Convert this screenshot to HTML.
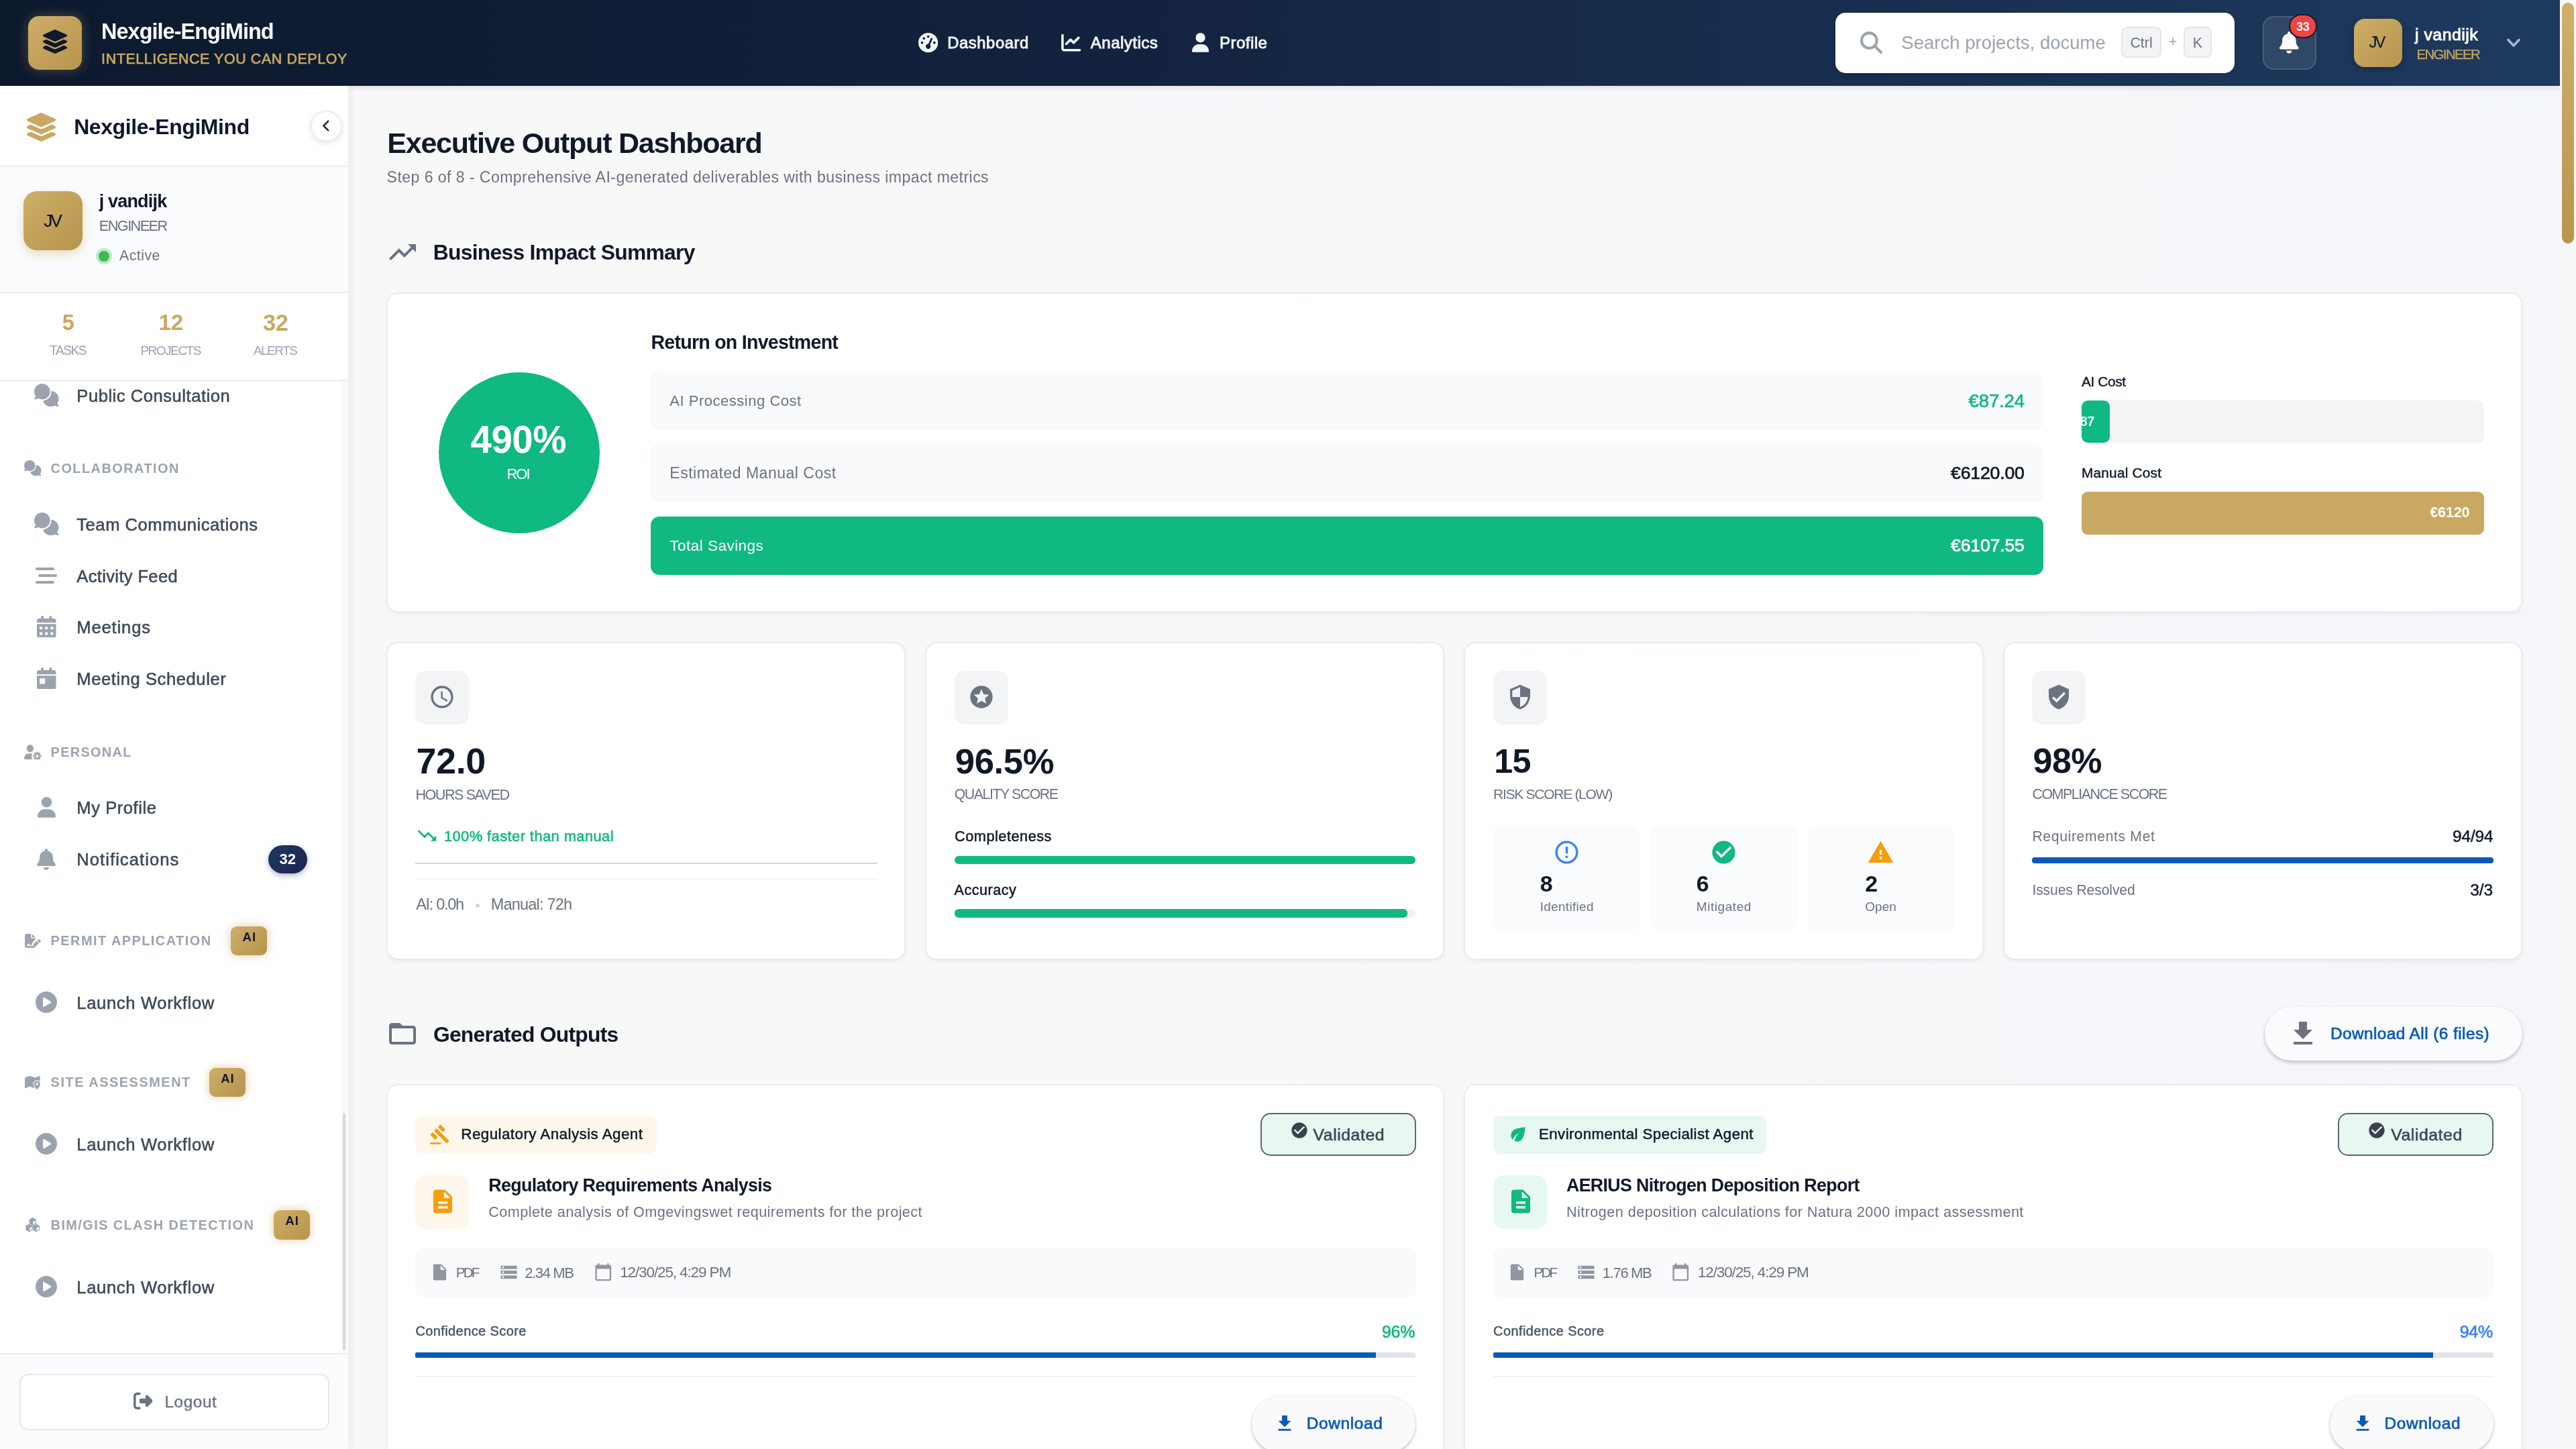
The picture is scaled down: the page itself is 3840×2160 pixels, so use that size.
<!DOCTYPE html>
<html><head><meta charset="utf-8"><title>Executive Output Dashboard</title>
<style>
html,body{margin:0;padding:0}
html{overflow:hidden}
body{width:3840px;height:2160px;overflow:hidden;position:relative;background:linear-gradient(100deg,#f8f8f8 15%,#f7f8f9 50%,#f5f6f9 100%);font-family:"Liberation Sans",sans-serif;}
div,svg{box-sizing:content-box}
@media (max-width:2600px){body{zoom:.66667}}
@media (max-width:2000px){body{zoom:.5}}
@media (max-width:1300px){body{zoom:.33333}}
</style></head><body>
<div style="position:absolute;left:0;top:0;width:3816px;height:128px;background:linear-gradient(90deg,#0c192d 0%,#13233f 45%,#1e3a5f 100%);box-shadow:0 2px 9px rgba(15,23,42,.12);z-index:5;will-change:transform">
<div style="position:absolute;left:42px;top:24px;width:80px;height:80px;border-radius:16px;background:linear-gradient(135deg,#cdae68,#b8944c);box-shadow:0 0 18px rgba(201,169,97,.35);"></div>
<svg style="position:absolute;left:64.3px;top:44px;color:#0f172a;" width="36" height="36" viewBox="0 0 512 512" preserveAspectRatio="none" fill="currentColor"><path d="M12.41 148.02l232.94 105.67c6.8 3.09 14.49 3.09 21.29 0l232.94-105.67c16.55-7.51 16.55-32.52 0-40.03L266.65 2.31a25.607 25.607 0 0 0-21.29 0L12.41 107.98c-16.55 7.51-16.55 32.53 0 40.04zm487.18 88.28l-58.09-26.33-161.64 73.27c-7.56 3.43-15.59 5.17-23.86 5.17s-16.29-1.74-23.86-5.17L70.51 209.97l-58.1 26.33c-16.55 7.5-16.55 32.5 0 40l232.94 105.59c6.8 3.08 14.49 3.08 21.29 0L499.59 276.3c16.55-7.5 16.55-32.5 0-40zm0 127.8l-57.87-26.23-161.86 73.37c-7.56 3.43-15.59 5.17-23.86 5.17s-16.29-1.74-23.86-5.17L70.29 337.87 12.41 364.1c-16.55 7.5-16.55 32.5 0 40l232.94 105.59c6.8 3.08 14.49 3.08 21.29 0L499.59 404.1c16.55-7.5 16.55-32.5 0-40z"/></svg>
<div style="position:absolute;left:151.1px;top:27.1px;font-size:32.4px;line-height:40px;color:#fff;white-space:nowrap;font-weight:700;letter-spacing:-0.95px;">Nexgile-EngiMind</div>
<div style="position:absolute;left:151.1px;top:74.8px;font-size:21.39px;line-height:27px;color:#c9a961;white-space:nowrap;letter-spacing:0.62px;-webkit-text-stroke:0.7px #c9a961;">INTELLIGENCE YOU CAN DEPLOY</div>
<svg style="position:absolute;left:1368.8px;top:49.1px;color:#f1f5f9;" width="29.4" height="29.4" viewBox="0 0 512 512" preserveAspectRatio="none" fill="currentColor"><path fill-rule="evenodd" d="M0 256a256 256 0 1 1 512 0A256 256 0 1 1 0 256zM288 96a32 32 0 1 0 -64 0 32 32 0 1 0 64 0zM256 416c35.3 0 64-28.7 64-64c0-17.4-6.9-33.1-18.1-44.6L366 161.7c5.3-12.1-.2-26.3-12.3-31.6s-26.3 .2-31.6 12.3L257.9 288c-.6 0-1.3 0-1.9 0c-35.3 0-64 28.7-64 64s28.700 64 64 64zM176 144a32 32 0 1 0 -64 0 32 32 0 1 0 64 0zM96 288a32 32 0 1 0 0-64 32 32 0 1 0 0 64zm352-32a32 32 0 1 0 -64 0 32 32 0 1 0 64 0z"/></svg>
<div style="position:absolute;left:1412.2px;top:49.4px;font-size:23.78px;line-height:30px;color:#f1f5f9;white-space:nowrap;letter-spacing:0.61px;-webkit-text-stroke:0.9px #f1f5f9;">Dashboard</div>
<svg style="position:absolute;left:1582px;top:49.1px;color:#f1f5f9;" width="29.4" height="29.4" viewBox="0 0 512 512" preserveAspectRatio="none" fill="currentColor"><path d="M64 64c0-17.7-14.3-32-32-32S0 46.3 0 64V400c0 44.2 35.8 80 80 80H480c17.7 0 32-14.3 32-32s-14.3-32-32-32H80c-8.8 0-16-7.2-16-16V64zm406.6 86.6c12.5-12.5 12.5-32.8 0-45.3s-32.8-12.5-45.3 0L320 210.7l-57.4-57.4c-12.5-12.5-32.8-12.5-45.3 0l-112 112c-12.5 12.5-12.5 32.8 0 45.3s32.8 12.5 45.3 0L240 221.3l57.4 57.4c12.5 12.5 32.8 12.5 45.3 0l128-128z"/></svg>
<div style="position:absolute;left:1625.8px;top:49.4px;font-size:23.99px;line-height:30px;color:#f1f5f9;white-space:nowrap;letter-spacing:0.5px;-webkit-text-stroke:0.9px #f1f5f9;">Analytics</div>
<svg style="position:absolute;left:1776.9px;top:49.2px;color:#f1f5f9;" width="25" height="28.8" viewBox="0 0 448 512" preserveAspectRatio="none" fill="currentColor"><path d="M224 256A128 128 0 1 0 224 0a128 128 0 1 0 0 256zm-45.7 48C79.8 304 0 383.8 0 482.3C0 498.7 13.3 512 29.7 512H418.3c16.4 0 29.7-13.3 29.7-29.7C448 383.8 368.2 304 269.7 304H178.3z"/></svg>
<div style="position:absolute;left:1818px;top:49.4px;font-size:24.04px;line-height:30px;color:#f1f5f9;white-space:nowrap;letter-spacing:0.47px;-webkit-text-stroke:0.9px #f1f5f9;">Profile</div>
<div style="position:absolute;left:2736px;top:19px;width:595px;height:89.5px;border-radius:15px;background:#fff;box-shadow:0 2px 6px rgba(0,0,0,.12);"></div>
<svg style="position:absolute;left:2772.7px;top:47.2px;color:#9ca3af;" width="33" height="33" viewBox="0 0 512 512" preserveAspectRatio="none" fill="currentColor"><path fill-rule="evenodd" d="M416 208c0 45.9-14.9 88.3-40 122.7L502.6 457.4c12.5 12.5 12.5 32.8 0 45.3s-32.8 12.5-45.3 0L330.7 376c-34.4 25.2-76.8 40-122.7 40C93.1 416 0 322.9 0 208S93.1 0 208 0S416 93.1 416 208zM208 352a144 144 0 1 0 0-288 144 144 0 1 0 0 288z"/></svg>
<div style="position:absolute;left:2830px;top:40px;width:309.8px;height:48px;overflow:hidden;"><div style="position:absolute;left:4.3px;top:6.9px;font-size:27.54px;line-height:34px;color:#9ca3af;white-space:nowrap;">Search projects, documents, tasks...</div></div>
<div style="position:absolute;left:3162px;top:40px;width:60px;height:45.5px;border-radius:8px;background:#f3f4f6;border:2px solid #e5e7eb;box-sizing:border-box;"></div>
<div style="position:absolute;left:3175.4px;top:50.7px;font-size:21.4px;line-height:27px;color:#6b7280;white-space:nowrap;letter-spacing:0.01px;">Ctrl</div>
<div style="position:absolute;left:3232.65px;top:49px;font-size:21.4px;line-height:27px;color:#9ca3af;white-space:nowrap;">+</div>
<div style="position:absolute;left:3255px;top:40px;width:42px;height:45.5px;border-radius:8px;background:#f3f4f6;border:2px solid #e5e7eb;box-sizing:border-box;"></div>
<div style="position:absolute;left:3268.66px;top:50.7px;font-size:21.4px;line-height:27px;color:#6b7280;white-space:nowrap;">K</div>
<div style="position:absolute;left:3373px;top:24px;width:80px;height:80px;border-radius:16px;background:rgba(255,255,255,.09);border:2px solid rgba(255,255,255,.13);box-sizing:border-box;"></div>
<svg style="position:absolute;left:3398px;top:47.2px;color:#fff;" width="28.6" height="32.6" viewBox="0 0 448 512" preserveAspectRatio="none" fill="currentColor"><path d="M224 0c-17.7 0-32 14.3-32 32V51.2C119 66 64 130.6 64 208v18.8c0 47-17.3 92.4-48.5 127.6l-7.4 8.3c-8.4 9.4-10.4 22.9-5.3 34.400S19.4 416 32 416H416c12.6 0 24-7.4 29.200-18.900s3.100-25-5.300-34.400l-7.400-8.300C401.300 319.200 384 273.900 384 226.800V208c0-77.400-55-142-128-156.800V32c0-17.700-14.300-32-32-32zm45.300 493.300c12-12 18.700-28.300 18.700-45.300H224 160c0 17 6.700 33.300 18.700 45.300s28.300 18.700 45.300 18.700s33.300-6.700 45.300-18.700z"/></svg>
<div style="position:absolute;left:3412.2px;top:21px;width:42px;height:35.8px;border-radius:18px;background:#ef4444;border:2.5px solid #111c33;box-sizing:border-box;"></div>
<div style="position:absolute;left:3423.21px;top:28.8px;font-size:17.6px;line-height:22px;color:#fff;white-space:nowrap;font-weight:700;">33</div>
<div style="position:absolute;left:3509px;top:27.5px;width:72px;height:72px;border-radius:16px;background:linear-gradient(135deg,#cdae68,#b8944c);box-shadow:0 3px 10px rgba(0,0,0,.25);"></div>
<div style="position:absolute;left:3531.75px;top:48.7px;font-size:23.11px;line-height:29px;color:#0f172a;white-space:nowrap;letter-spacing:-2.67px;-webkit-text-stroke:0.2px #0f172a;">JV</div>
<div style="position:absolute;left:3600.12px;top:36px;font-size:24.84px;line-height:31px;color:#fff;white-space:nowrap;letter-spacing:0.47px;-webkit-text-stroke:0.9px #fff;">j vandijk</div>
<div style="position:absolute;left:3602.4px;top:68.8px;font-size:20.25px;line-height:25px;color:#c9a961;white-space:nowrap;letter-spacing:-1.5px;-webkit-text-stroke:0.25px #c9a961;">ENGINEER</div>
<svg style="position:absolute;left:3737px;top:56.5px" width="20" height="15" viewBox="0 0 20 15" fill="none" stroke="#a9b6c9" stroke-width="3.6" stroke-linecap="round" stroke-linejoin="round"><path d="M2 2.5l8 8.5 8-8.5"/></svg>
</div>
<div style="position:absolute;left:3816px;top:0px;width:24px;height:2160px;background:#f7f8fa;z-index:6;"></div>
<div style="position:absolute;left:3819px;top:3.5px;width:17.9px;height:359.5px;border-radius:9px;background:linear-gradient(180deg,#cfb06b,#b8954f);z-index:7;"></div>
<div style="position:absolute;left:0;top:128px;width:518.7px;height:2032px;background:#fff;box-shadow:1px 0 0 #eceef0,3px 0 9px rgba(15,23,42,.07);z-index:6;overflow:hidden;will-change:transform">
<div style="position:absolute;left:0;top:-128px;width:518px;height:2160px">
<svg style="position:absolute;left:39.8px;top:167.8px;color:#c9a961;" width="43" height="43" viewBox="0 0 512 512" preserveAspectRatio="none" fill="currentColor"><path d="M12.41 148.02l232.94 105.67c6.8 3.09 14.49 3.09 21.29 0l232.94-105.67c16.55-7.51 16.55-32.52 0-40.03L266.65 2.31a25.607 25.607 0 0 0-21.29 0L12.41 107.98c-16.55 7.51-16.55 32.53 0 40.04zm487.18 88.28l-58.09-26.33-161.64 73.27c-7.56 3.43-15.59 5.17-23.86 5.17s-16.29-1.74-23.86-5.17L70.51 209.97l-58.1 26.33c-16.55 7.5-16.55 32.5 0 40l232.94 105.59c6.8 3.08 14.49 3.08 21.29 0L499.59 276.3c16.55-7.5 16.55-32.5 0-40zm0 127.8l-57.87-26.23-161.86 73.37c-7.56 3.43-15.59 5.17-23.86 5.17s-16.29-1.74-23.86-5.17L70.29 337.87 12.41 364.1c-16.55 7.5-16.55 32.5 0 40l232.94 105.59c6.8 3.08 14.49 3.08 21.29 0L499.59 404.1c16.55-7.5 16.55-32.5 0-40z"/></svg>
<div style="position:absolute;left:110.2px;top:168.7px;font-size:32px;line-height:40px;color:#0f172a;white-space:nowrap;font-weight:700;letter-spacing:-0.43px;">Nexgile-EngiMind</div>
<div style="position:absolute;left:463.2px;top:165px;width:46.4px;height:46.4px;border-radius:50%;background:#fff;border:2px solid #eceef1;box-sizing:border-box;box-shadow:0 3px 9px rgba(15,23,42,.11);"></div>
<svg style="position:absolute;left:479px;top:178.4px" width="14" height="19" viewBox="0 0 14 19" fill="none" stroke="#1f2937" stroke-width="2.5" stroke-linecap="round" stroke-linejoin="round"><path d="M10.2 2.6L3.4 9.5l6.8 6.9"/></svg>
<div style="position:absolute;left:0px;top:247px;width:518px;height:2px;background:#e9ebef;"></div>
<div style="position:absolute;left:0px;top:249px;width:518px;height:186px;background:#fafbfc;"></div>
<div style="position:absolute;left:35px;top:284.5px;width:88px;height:88px;border-radius:20px;background:linear-gradient(135deg,#cdae68,#b8944c);box-shadow:0 6px 14px rgba(201,169,97,.35);"></div>
<div style="position:absolute;left:65.15px;top:312.5px;font-size:26.35px;line-height:33px;color:#0f172a;white-space:nowrap;letter-spacing:-3.05px;-webkit-text-stroke:0.25px #0f172a;">JV</div>
<div style="position:absolute;left:147.63px;top:282.5px;font-size:27px;line-height:34px;color:#0f172a;white-space:nowrap;font-weight:700;letter-spacing:-0.81px;">j vandijk</div>
<div style="position:absolute;left:147.8px;top:322.9px;font-size:21.78px;line-height:27px;color:#6b7280;white-space:nowrap;letter-spacing:-1.61px;">ENGINEER</div>
<div style="position:absolute;left:143.2px;top:370.2px;width:24px;height:24px;border-radius:50%;background:#bfe8c8;"></div>
<div style="position:absolute;left:147.2px;top:374.2px;width:16px;height:16px;border-radius:50%;background:#3fb950;"></div>
<div style="position:absolute;left:178px;top:367.5px;font-size:21.33px;line-height:27px;color:#6b7280;white-space:nowrap;letter-spacing:0.48px;">Active</div>
<div style="position:absolute;left:0px;top:435px;width:518px;height:2px;background:#e9ebef;"></div>
<div style="position:absolute;left:92.87px;top:460.8px;font-size:32.47px;line-height:41px;color:#c9a961;white-space:nowrap;font-weight:700;">5</div>
<div style="position:absolute;left:74.05px;top:511.3px;font-size:19.29px;line-height:24px;color:#9ca3af;white-space:nowrap;letter-spacing:-1.53px;">TASKS</div>
<div style="position:absolute;left:236.5px;top:460.3px;font-size:33.42px;line-height:42px;color:#c9a961;white-space:nowrap;font-weight:700;letter-spacing:-0.37px;">12</div>
<div style="position:absolute;left:209.4px;top:511.3px;font-size:18.94px;line-height:24px;color:#9ca3af;white-space:nowrap;letter-spacing:-1.43px;">PROJECTS</div>
<div style="position:absolute;left:392px;top:459.8px;font-size:34.33px;line-height:43px;color:#c9a961;white-space:nowrap;font-weight:700;letter-spacing:-0.38px;">32</div>
<div style="position:absolute;left:377.9px;top:511.3px;font-size:18.92px;line-height:24px;color:#9ca3af;white-space:nowrap;letter-spacing:-1.45px;">ALERTS</div>
<div style="position:absolute;left:0px;top:566px;width:518px;height:2px;background:#e9ebef;"></div>
<svg style="position:absolute;left:51.05px;top:571.5px;color:#9ca3af;" width="36.5" height="34" viewBox="0 0 640 512" preserveAspectRatio="none" fill="currentColor"><path d="M208 352c114.900 0 208-78.800 208-176S322.900 0 208 0S0 78.800 0 176c0 38.600 14.700 74.300 39.600 103.400c-3.500 9.400-8.700 17.700-14.200 24.700c-4.800 6.200-9.700 11-13.300 14.300c-1.800 1.600-3.300 2.900-4.300 3.700c-.5 .4-.9 .7-1.100 .8l-.2 .2C1 327.200-1.400 334.400 .8 340.900S9.100 352 16 352c21.800 0 43.800-5.600 62.100-12.500c9.200-3.500 17.800-7.400 25.300-11.400C134.100 343.300 169.800 352 208 352zM448 176c0 112.300-99.100 196.900-216.500 207C255.800 457.400 336.400 512 432 512c38.200 0 73.900-8.700 104.700-23.900c7.500 4 16 7.900 25.200 11.400c18.300 6.900 40.300 12.500 62.100 12.500c6.900 0 13.100-4.500 15.200-11.100c2.100-6.600-.2-13.800-5.800-17.900l-.2-.2c-.2-.2-.6-.4-1.100-.8c-1-.8-2.500-2-4.300-3.700c-3.600-3.300-8.500-8.100-13.300-14.300c-5.500-7-10.700-15.400-14.200-24.700c24.900-29 39.600-64.700 39.600-103.400c0-92.800-84.900-168.900-192.600-175.500c.4 5.100 .6 10.300 .6 15.500z"/></svg><div style="position:absolute;left:114.3px;top:573.5px;font-size:25.59px;line-height:32px;color:#3f4957;white-space:nowrap;letter-spacing:0.53px;-webkit-text-stroke:0.55px #3f4957;">Public Consultation</div>
<svg style="position:absolute;left:36.15px;top:686.35px;color:#9ca3af;" width="25.5" height="23.5" viewBox="0 0 640 512" preserveAspectRatio="none" fill="currentColor"><path d="M208 352c114.900 0 208-78.800 208-176S322.900 0 208 0S0 78.800 0 176c0 38.600 14.700 74.300 39.600 103.400c-3.500 9.400-8.700 17.700-14.200 24.700c-4.800 6.200-9.700 11-13.300 14.300c-1.800 1.600-3.300 2.900-4.300 3.700c-.5 .4-.9 .7-1.100 .8l-.2 .2C1 327.200-1.400 334.400 .8 340.900S9.100 352 16 352c21.800 0 43.800-5.600 62.100-12.500c9.200-3.500 17.800-7.400 25.300-11.400C134.100 343.300 169.800 352 208 352zM448 176c0 112.300-99.100 196.900-216.500 207C255.800 457.400 336.400 512 432 512c38.200 0 73.900-8.700 104.700-23.900c7.500 4 16 7.900 25.200 11.400c18.300 6.900 40.300 12.500 62.100 12.500c6.900 0 13.100-4.500 15.200-11.100c2.100-6.600-.2-13.800-5.800-17.900l-.2-.2c-.2-.2-.6-.4-1.100-.8c-1-.8-2.500-2-4.300-3.700c-3.600-3.300-8.500-8.100-13.300-14.300c-5.500-7-10.700-15.400-14.200-24.700c24.900-29 39.600-64.700 39.600-103.400c0-92.800-84.900-168.900-192.600-175.500c.4 5.100 .6 10.300 .6 15.500z"/></svg><div style="position:absolute;left:75.6px;top:686.1px;font-size:19.9px;line-height:25px;color:#9ca3af;white-space:nowrap;font-weight:700;letter-spacing:1.47px;">COLLABORATION</div>
<svg style="position:absolute;left:51.05px;top:764px;color:#9ca3af;" width="36.5" height="34" viewBox="0 0 640 512" preserveAspectRatio="none" fill="currentColor"><path d="M208 352c114.900 0 208-78.800 208-176S322.900 0 208 0S0 78.800 0 176c0 38.600 14.700 74.300 39.600 103.400c-3.500 9.400-8.700 17.700-14.200 24.700c-4.800 6.200-9.700 11-13.300 14.300c-1.800 1.600-3.300 2.900-4.300 3.700c-.5 .4-.9 .7-1.100 .8l-.2 .2C1 327.200-1.400 334.400 .8 340.900S9.100 352 16 352c21.800 0 43.800-5.600 62.100-12.500c9.200-3.500 17.800-7.400 25.300-11.400C134.100 343.300 169.800 352 208 352zM448 176c0 112.300-99.100 196.900-216.500 207C255.800 457.400 336.400 512 432 512c38.200 0 73.900-8.700 104.700-23.900c7.500 4 16 7.900 25.200 11.400c18.300 6.900 40.300 12.500 62.100 12.500c6.900 0 13.100-4.500 15.200-11.100c2.100-6.600-.2-13.800-5.800-17.900l-.2-.2c-.2-.2-.6-.4-1.100-.8c-1-.8-2.500-2-4.300-3.700c-3.600-3.300-8.500-8.100-13.300-14.300c-5.500-7-10.700-15.400-14.200-24.700c24.900-29 39.600-64.700 39.600-103.400c0-92.800-84.900-168.900-192.600-175.500c.4 5.100 .6 10.300 .6 15.500z"/></svg><div style="position:absolute;left:114.3px;top:766px;font-size:25.59px;line-height:32px;color:#3f4957;white-space:nowrap;letter-spacing:0.53px;-webkit-text-stroke:0.55px #3f4957;">Team Communications</div>
<svg style="position:absolute;left:53.3px;top:841.6px;color:#9ca3af;" width="32" height="32" viewBox="0 0 512 512" preserveAspectRatio="none" fill="currentColor"><rect x="0" y="64" width="448" height="64" rx="32"/><rect x="64" y="224" width="448" height="64" rx="32"/><rect x="0" y="384" width="448" height="64" rx="32"/></svg><div style="position:absolute;left:114.3px;top:842.6px;font-size:25.59px;line-height:32px;color:#3f4957;white-space:nowrap;letter-spacing:0.33px;-webkit-text-stroke:0.55px #3f4957;">Activity Feed</div>
<svg style="position:absolute;left:55.05px;top:917.91px;color:#9ca3af;" width="28.5" height="32.57" viewBox="0 0 448 512" preserveAspectRatio="none" fill="currentColor"><path fill-rule="evenodd" d="M128 0c17.700 0 32 14.300 32 32V64H288V32c0-17.700 14.300-32 32-32s32 14.300 32 32V64h48c26.500 0 48 21.500 48 48v48H0V112C0 85.500 21.500 64 48 64H96V32c0-17.700 14.300-32 32-32zM0 192H448V464c0 26.500-21.500 48-48 48H48c-26.500 0-48-21.500-48-48V192zm64 80v32c0 8.800 7.200 16 16 16h32c8.800 0 16-7.200 16-16V272c0-8.800-7.200-16-16-16H80c-8.800 0-16 7.200-16 16zm128 0v32c0 8.800 7.200 16 16 16h32c8.800 0 16-7.200 16-16V272c0-8.800-7.200-16-16-16H208c-8.800 0-16 7.200-16 16zm144-16c-8.800 0-16 7.200-16 16v32c0 8.800 7.200 16 16 16h32c8.800 0 16-7.200 16-16V272c0-8.800-7.200-16-16-16H336zM64 400v32c0 8.800 7.200 16 16 16h32c8.800 0 16-7.200 16-16V400c0-8.800-7.200-16-16-16H80c-8.800 0-16 7.200-16 16zm144-16c-8.800 0-16 7.200-16 16v32c0 8.800 7.200 16 16 16h32c8.800 0 16-7.200 16-16V400c0-8.800-7.200-16-16-16H208zm112 16v32c0 8.800 7.200 16 16 16h32c8.800 0 16-7.200 16-16V400c0-8.800-7.200-16-16-16H336c-8.800 0-16 7.200-16 16z"/></svg><div style="position:absolute;left:114.3px;top:919.2px;font-size:25.59px;line-height:32px;color:#3f4957;white-space:nowrap;letter-spacing:0.85px;-webkit-text-stroke:0.55px #3f4957;">Meetings</div>
<svg style="position:absolute;left:55.05px;top:994.71px;color:#9ca3af;" width="28.5" height="32.57" viewBox="0 0 448 512" preserveAspectRatio="none" fill="currentColor"><path fill-rule="evenodd" d="M128 0c17.700 0 32 14.300 32 32V64H288V32c0-17.700 14.300-32 32-32s32 14.300 32 32V64h48c26.500 0 48 21.500 48 48v48H0V112C0 85.500 21.500 64 48 64H96V32c0-17.700 14.300-32 32-32zM0 192H448V464c0 26.500-21.500 48-48 48H48c-26.500 0-48-21.500-48-48V192zm80 64c-8.800 0-16 7.200-16 16v96c0 8.800 7.200 16 16 16h96c8.800 0 16-7.200 16-16V272c0-8.800-7.200-16-16-16H80z"/></svg><div style="position:absolute;left:114.3px;top:996px;font-size:25.59px;line-height:32px;color:#3f4957;white-space:nowrap;letter-spacing:0.57px;-webkit-text-stroke:0.55px #3f4957;">Meeting Scheduler</div>
<svg style="position:absolute;left:36.15px;top:1109.7px;color:#9ca3af;" width="25.5" height="22.4" viewBox="0 0 640 512" preserveAspectRatio="none" fill="currentColor"><circle cx="224" cy="128" r="128"/><path d="M178 304C80 304 0 384 0 482c0 17 13 30 30 30h290c-38-40-52-92-40-140 6-24 16-44 30-62-14-4-28-6-44-6z"/><circle cx="488" cy="392" r="176" fill="#fff"/><circle cx="488" cy="392" r="112"/><rect x="457" y="242" width="62" height="300" rx="10" transform="rotate(0.0 488 392)"/><rect x="457" y="242" width="62" height="300" rx="10" transform="rotate(45.0 488 392)"/><rect x="457" y="242" width="62" height="300" rx="10" transform="rotate(90.0 488 392)"/><rect x="457" y="242" width="62" height="300" rx="10" transform="rotate(135.0 488 392)"/><circle cx="488" cy="392" r="50" fill="#fff"/></svg><div style="position:absolute;left:75.6px;top:1108.9px;font-size:19.9px;line-height:25px;color:#9ca3af;white-space:nowrap;font-weight:700;letter-spacing:1.32px;">PERSONAL</div>
<svg style="position:absolute;left:55.8px;top:1187.87px;color:#9ca3af;" width="27" height="30.86" viewBox="0 0 448 512" preserveAspectRatio="none" fill="currentColor"><path d="M224 256A128 128 0 1 0 224 0a128 128 0 1 0 0 256zm-45.7 48C79.8 304 0 383.8 0 482.3C0 498.7 13.3 512 29.7 512H418.3c16.4 0 29.7-13.3 29.7-29.7C448 383.8 368.2 304 269.7 304H178.3z"/></svg><div style="position:absolute;left:114.3px;top:1188.3px;font-size:25.59px;line-height:32px;color:#3f4957;white-space:nowrap;letter-spacing:0.55px;-webkit-text-stroke:0.55px #3f4957;">My Profile</div>
<svg style="position:absolute;left:55.3px;top:1265.4px;color:#9ca3af;" width="28" height="32" viewBox="0 0 448 512" preserveAspectRatio="none" fill="currentColor"><path d="M224 0c-17.7 0-32 14.3-32 32V51.2C119 66 64 130.6 64 208v18.8c0 47-17.3 92.4-48.5 127.6l-7.4 8.3c-8.4 9.4-10.4 22.9-5.3 34.400S19.4 416 32 416H416c12.6 0 24-7.4 29.200-18.900s3.100-25-5.300-34.400l-7.400-8.300C401.300 319.200 384 273.900 384 226.800V208c0-77.400-55-142-128-156.800V32c0-17.700-14.300-32-32-32zm45.300 493.300c12-12 18.700-28.300 18.700-45.300H224 160c0 17 6.700 33.300 18.700 45.300s28.300 18.700 45.300 18.700s33.300-6.700 45.300-18.700z"/></svg><div style="position:absolute;left:114.3px;top:1265px;font-size:25.59px;line-height:32px;color:#3f4957;white-space:nowrap;letter-spacing:1.05px;-webkit-text-stroke:0.55px #3f4957;">Notifications</div>
<div style="position:absolute;left:400px;top:1260px;width:57.5px;height:42px;border-radius:21px;background:linear-gradient(135deg,#1e3a5f,#1a2352);box-shadow:0 3px 8px rgba(30,42,94,.35);"></div>
<div style="position:absolute;left:416.57px;top:1267px;font-size:22px;line-height:28px;color:#fff;white-space:nowrap;font-weight:700;">32</div>
<svg style="position:absolute;left:37.15px;top:1391.86px;color:#9ca3af;" width="23.5" height="20.89" viewBox="0 0 576 512" preserveAspectRatio="none" fill="currentColor"><path fill-rule="evenodd" d="M64 0C28.700 0 0 28.700 0 64V448c0 35.300 28.700 64 64 64H320c35.300 0 64-28.700 64-64V428l-70 18c-30 7-58-20-51-51l16-62c4-17 13-32 25-44l80-80V160H256c-17.700 0-32-14.300-32-32V0H64zM256 0V128H384L256 0zM80 420c20-60 50-80 70-50l30 50 40-30 30 40h40v30H230l-20-25-40 30-40-60-20 45H80z"/><path d="M550 218c-19-19-49-19-68 0l-30 30 84 84 30-30c19-19 19-49 0-68zM330 370c-4 4-7 9-8 15l-18 70c-3 11 8 22 19 19l70-18c6-1 11-4 15-8l106-106-84-84z"/></svg><div style="position:absolute;left:75.6px;top:1390.3px;font-size:19.9px;line-height:25px;color:#9ca3af;white-space:nowrap;font-weight:700;letter-spacing:1.48px;">PERMIT APPLICATION</div><div style="position:absolute;left:344.3px;top:1380.5px;width:54px;height:43.5px;border-radius:9px;background:linear-gradient(135deg,#cdae68,#b8944c);box-shadow:0 0 14px rgba(201,169,97,.55);"></div><div style="position:absolute;left:361.5px;top:1384.5px;font-size:18.6px;line-height:23px;color:#0f172a;white-space:nowrap;font-weight:700;letter-spacing:1px;">AI</div>
<svg style="position:absolute;left:53.3px;top:1477.8px;color:#9ca3af;" width="32" height="32" viewBox="0 0 512 512" preserveAspectRatio="none" fill="currentColor"><path fill-rule="evenodd" d="M0 256a256 256 0 1 1 512 0A256 256 0 1 1 0 256zM188.300 147.100c-7.600 4.200-12.300 12.300-12.300 20.900V344c0 8.700 4.700 16.700 12.300 20.900s16.800 4.100 24.300-.5l144-88c7.100-4.400 11.500-12.100 11.500-20.500s-4.400-16.100-11.500-20.500l-144-88c-7.400-4.500-16.700-4.700-24.300-.5z"/></svg><div style="position:absolute;left:114.3px;top:1478.8px;font-size:25.59px;line-height:32px;color:#3f4957;white-space:nowrap;letter-spacing:0.66px;-webkit-text-stroke:0.55px #3f4957;">Launch Workflow</div>
<svg style="position:absolute;left:36.6px;top:1602.1px;color:#9ca3af;" width="24.6" height="22.4" viewBox="0 0 576 512" preserveAspectRatio="none" fill="currentColor"><path d="M0 105 L175 38 L355 105 L530 38 V400 L355 468 L175 400 L0 468Z"/><path d="M430 215a108 108 0 0 1 108 108c0 58-68 140-108 189-40-49-108-131-108-189a108 108 0 0 1 108-108z" stroke="#fff" stroke-width="56" stroke-linejoin="round" paint-order="stroke"/><circle cx="430" cy="322" r="40" fill="#fff"/></svg><div style="position:absolute;left:75.6px;top:1601.3px;font-size:19.9px;line-height:25px;color:#9ca3af;white-space:nowrap;font-weight:700;letter-spacing:1.54px;">SITE ASSESSMENT</div><div style="position:absolute;left:312px;top:1591.5px;width:54px;height:43.5px;border-radius:9px;background:linear-gradient(135deg,#cdae68,#b8944c);box-shadow:0 0 14px rgba(201,169,97,.55);"></div><div style="position:absolute;left:329.2px;top:1595.5px;font-size:18.6px;line-height:23px;color:#0f172a;white-space:nowrap;font-weight:700;letter-spacing:1px;">AI</div>
<svg style="position:absolute;left:53.3px;top:1688.6px;color:#9ca3af;" width="32" height="32" viewBox="0 0 512 512" preserveAspectRatio="none" fill="currentColor"><path fill-rule="evenodd" d="M0 256a256 256 0 1 1 512 0A256 256 0 1 1 0 256zM188.300 147.100c-7.600 4.200-12.300 12.300-12.300 20.900V344c0 8.700 4.700 16.700 12.300 20.900s16.800 4.100 24.300-.5l144-88c7.100-4.400 11.500-12.100 11.500-20.500s-4.400-16.100-11.500-20.500l-144-88c-7.400-4.500-16.700-4.700-24.300-.5z"/></svg><div style="position:absolute;left:114.3px;top:1689.6px;font-size:25.59px;line-height:32px;color:#3f4957;white-space:nowrap;letter-spacing:0.66px;-webkit-text-stroke:0.55px #3f4957;">Launch Workflow</div>
<svg style="position:absolute;left:37.15px;top:1815.05px;color:#9ca3af;" width="23.5" height="21.5" viewBox="0 0 576 512" preserveAspectRatio="none" fill="currentColor"><path d="M288 12 L399 76 L399 204 L288 268 L177 204 L177 76Z" stroke="currentColor" stroke-width="30" stroke-linejoin="round"/><path d="M309 152 L378 112 L378 192 L309 232Z" fill="#fff" stroke="#fff" stroke-width="14" stroke-linejoin="round"/><path d="M160 238 L271 302 L271 430 L160 494 L49 430 L49 302Z" stroke="currentColor" stroke-width="30" stroke-linejoin="round"/><path d="M181 378 L250 338 L250 418 L181 458Z" fill="#fff" stroke="#fff" stroke-width="14" stroke-linejoin="round"/><path d="M416 238 L527 302 L527 430 L416 494 L305 430 L305 302Z" stroke="currentColor" stroke-width="30" stroke-linejoin="round"/><path d="M437 378 L506 338 L506 418 L437 458Z" fill="#fff" stroke="#fff" stroke-width="14" stroke-linejoin="round"/></svg><div style="position:absolute;left:75.6px;top:1813.8px;font-size:19.9px;line-height:25px;color:#9ca3af;white-space:nowrap;font-weight:700;letter-spacing:1.43px;">BIM/GIS CLASH DETECTION</div><div style="position:absolute;left:408.1px;top:1804px;width:54px;height:43.5px;border-radius:9px;background:linear-gradient(135deg,#cdae68,#b8944c);box-shadow:0 0 14px rgba(201,169,97,.55);"></div><div style="position:absolute;left:425.3px;top:1808px;font-size:18.6px;line-height:23px;color:#0f172a;white-space:nowrap;font-weight:700;letter-spacing:1px;">AI</div>
<svg style="position:absolute;left:53.3px;top:1901.6px;color:#9ca3af;" width="32" height="32" viewBox="0 0 512 512" preserveAspectRatio="none" fill="currentColor"><path fill-rule="evenodd" d="M0 256a256 256 0 1 1 512 0A256 256 0 1 1 0 256zM188.300 147.100c-7.600 4.200-12.300 12.300-12.300 20.900V344c0 8.700 4.700 16.700 12.300 20.900s16.800 4.100 24.300-.5l144-88c7.100-4.400 11.500-12.100 11.500-20.500s-4.400-16.100-11.500-20.500l-144-88c-7.400-4.500-16.700-4.700-24.300-.5z"/></svg><div style="position:absolute;left:114.3px;top:1902.6px;font-size:25.59px;line-height:32px;color:#3f4957;white-space:nowrap;letter-spacing:0.66px;-webkit-text-stroke:0.55px #3f4957;">Launch Workflow</div>
<div style="position:absolute;left:508px;top:568px;width:10px;height:1450px;background:#f8f9fa;"></div>
<div style="position:absolute;left:510.5px;top:1659px;width:4.5px;height:354px;border-radius:3px;background:#d5d9df;"></div>
<div style="position:absolute;left:0px;top:2017px;width:518px;height:2px;background:#e9ebef;"></div>
<div style="position:absolute;left:0px;top:2019px;width:518px;height:141px;background:#fafbfc;"></div>
<div style="position:absolute;left:29px;top:2048px;width:462px;height:84px;border-radius:13px;background:#fff;border:2px solid #e5e7eb;box-sizing:border-box;"></div>
<svg style="position:absolute;left:198.8px;top:2074.4px;color:#6b7280;" width="28.7" height="28.7" viewBox="0 0 512 512" preserveAspectRatio="none" fill="currentColor"><path d="M377.900 105.900L500.700 228.700c7.200 7.200 11.300 17.100 11.300 27.300s-4.100 20.100-11.300 27.300L377.900 406.100c-6.400 6.400-15 9.900-24 9.900c-18.700 0-33.900-15.200-33.900-33.900l0-62.100-128 0c-17.700 0-32-14.300-32-32l0-64c0-17.700 14.300-32 32-32l128 0 0-62.100c0-18.700 15.200-33.900 33.900-33.900c9 0 17.600 3.600 24 9.900zM160 96L96 96c-17.700 0-32 14.300-32 32l0 256c0 17.700 14.300 32 32 32l64 0c17.700 0 32 14.300 32 32s-14.300 32-32 32l-64 0c-53 0-96-43-96-96L0 128C0 75 43 32 96 32l64 0c17.700 0 32 14.300 32 32s-14.300 32-32 32z"/></svg>
<div style="position:absolute;left:245.5px;top:2075px;font-size:24.29px;line-height:30px;color:#6b7280;white-space:nowrap;letter-spacing:0.62px;-webkit-text-stroke:0.4px #6b7280;">Logout</div>
</div></div>
<div style="position:absolute;left:0;top:0;width:3816px;height:2160px;overflow:hidden;will-change:transform">
<div style="position:absolute;left:577.3px;top:185.5px;font-size:43px;line-height:54px;color:#111827;white-space:nowrap;font-weight:700;letter-spacing:-1.23px;">Executive Output Dashboard</div><div style="position:absolute;left:576.6px;top:249.8px;font-size:23.07px;line-height:29px;color:#6b7280;white-space:nowrap;letter-spacing:0.44px;">Step 6 of 8 - Comprehensive AI-generated deliverables with business impact metrics</div><svg style="position:absolute;left:576px;top:351.5px;color:#6b7280;" width="48" height="48" viewBox="0 0 24 24" preserveAspectRatio="none" fill="currentColor"><path d="M16 6l2.29 2.29-4.88 4.88-4-4L2 16.59 3.41 18l6-6 4 4 6.3-6.29L22 12V6z"/></svg><div style="position:absolute;left:645.8px;top:356.4px;font-size:31.8px;line-height:40px;color:#111827;white-space:nowrap;font-weight:700;letter-spacing:-0.72px;">Business Impact Summary</div>
<div style="position:absolute;left:575.5px;top:435.5px;width:3184.5px;height:477.5px;background:#fff;border:2px solid #e9ebee;box-sizing:border-box;border-radius:17px;box-shadow:0 3px 6px rgba(15,23,42,.045);"></div><div style="position:absolute;left:654.2px;top:555px;width:240px;height:240px;border-radius:50%;background:#10b981;"></div><div style="position:absolute;left:701.5px;top:619.5px;font-size:56.46px;line-height:71px;color:#fff;white-space:nowrap;font-weight:700;letter-spacing:-0.48px;">490%</div><div style="position:absolute;left:755.5px;top:692.7px;font-size:21.85px;line-height:27px;color:#fff;white-space:nowrap;letter-spacing:-1.93px;">ROI</div><div style="position:absolute;left:970.4px;top:492.1px;font-size:28.6px;line-height:36px;color:#111827;white-space:nowrap;font-weight:700;letter-spacing:-0.76px;">Return on Investment</div><div style="position:absolute;left:970px;top:554px;width:2076px;height:86.5px;border-radius:13px;background:#f9fafb;"></div><div style="position:absolute;left:998.3px;top:583.5px;font-size:22.13px;line-height:28px;color:#6b7280;white-space:nowrap;letter-spacing:0.46px;">AI Processing Cost</div><div style="position:absolute;left:2934.6px;top:580.5px;font-size:27.54px;line-height:34px;color:#10b981;white-space:nowrap;letter-spacing:-0.17px;-webkit-text-stroke:0.7px #10b981;">€87.24</div><div style="position:absolute;left:970px;top:662px;width:2076px;height:86.5px;border-radius:13px;background:#f9fafb;"></div><div style="position:absolute;left:998.3px;top:691px;font-size:23px;line-height:29px;color:#6b7280;white-space:nowrap;letter-spacing:0.5px;">Estimated Manual Cost</div><div style="position:absolute;left:2908px;top:689px;font-size:26.64px;line-height:33px;color:#111827;white-space:nowrap;letter-spacing:-0.16px;-webkit-text-stroke:0.7px #111827;">€6120.00</div><div style="position:absolute;left:970px;top:770px;width:2076px;height:86.5px;border-radius:13px;background:#10b981;"></div><div style="position:absolute;left:998.3px;top:799.5px;font-size:22.52px;line-height:28px;color:#fff;white-space:nowrap;letter-spacing:0.47px;">Total Savings</div><div style="position:absolute;left:2908px;top:797px;font-size:26.64px;line-height:33px;color:#fff;white-space:nowrap;letter-spacing:-0.16px;-webkit-text-stroke:0.7px #fff;">€6107.55</div><div style="position:absolute;left:3103px;top:556.2px;font-size:20.82px;line-height:26px;color:#111827;white-space:nowrap;letter-spacing:-0.38px;-webkit-text-stroke:0.4px #111827;">AI Cost</div><div style="position:absolute;left:3103px;top:597px;width:600px;height:63px;border-radius:9px;background:#f3f4f6;overflow:hidden;"><div style="position:absolute;left:0px;top:0px;width:41.5px;height:63px;border-radius:9px;background:#10b981;overflow:hidden;"><div style="position:absolute;left:-2.6px;top:19.3px;font-size:19.98px;line-height:25px;color:#fff;white-space:nowrap;font-weight:700;letter-spacing:-0.22px;">87</div></div></div><div style="position:absolute;left:3103px;top:692.4px;font-size:20.82px;line-height:26px;color:#111827;white-space:nowrap;letter-spacing:0.21px;-webkit-text-stroke:0.4px #111827;">Manual Cost</div><div style="position:absolute;left:3103px;top:733px;width:600px;height:63.5px;border-radius:9px;background:#c9a961;"></div><div style="position:absolute;left:3622.3px;top:751.1px;font-size:21.5px;line-height:27px;color:#fff;white-space:nowrap;font-weight:700;letter-spacing:-0.15px;">€6120</div>
<div style="position:absolute;left:575.5px;top:957px;width:774.5px;height:473.5px;background:#fff;border:2px solid #e9ebee;box-sizing:border-box;border-radius:17px;box-shadow:0 3px 6px rgba(15,23,42,.045);"></div><div style="position:absolute;left:619.2px;top:1000px;width:80px;height:80px;border-radius:15px;background:#f3f4f6;"></div><svg style="position:absolute;left:639.2px;top:1019.2px;color:#6b7280;" width="40" height="40" viewBox="0 0 24 24" preserveAspectRatio="none" fill="currentColor"><path d="M11.99 2C6.47 2 2 6.48 2 12s4.47 10 9.99 10C17.52 22 22 17.52 22 12S17.52 2 11.99 2zM12 20c-4.42 0-8-3.58-8-8s3.58-8 8-8 8 3.58 8 8-3.58 8-8 8zm.5-13H11v6l5.25 3.15.75-1.23-4.5-2.67z"/></svg><div style="position:absolute;left:620.5px;top:1101px;font-size:53.87px;line-height:67px;color:#111827;white-space:nowrap;font-weight:700;letter-spacing:-0.35px;">72.0</div><div style="position:absolute;left:619.4px;top:1170.7px;font-size:21.68px;line-height:27px;color:#6b7280;white-space:nowrap;letter-spacing:-1.55px;">HOURS SAVED</div><svg style="position:absolute;left:619.5px;top:1229.4px;color:#10b981;" width="33" height="33" viewBox="0 0 24 24" preserveAspectRatio="none" fill="currentColor"><path d="M16 18l2.29-2.29-4.88-4.88-4 4L2 7.41 3.41 6l6 6 4-4 6.3 6.29L22 12v6z"/></svg><div style="position:absolute;left:661.9px;top:1232.5px;font-size:21.82px;line-height:27px;color:#10b981;white-space:nowrap;letter-spacing:0.46px;-webkit-text-stroke:0.6px #10b981;">100% faster than manual</div><div style="position:absolute;left:619px;top:1286px;width:688.5px;height:2px;background:#d1d5db;"></div><div style="position:absolute;left:619px;top:1308.5px;width:688.5px;height:2px;background:#f1f2f4;"></div><div style="position:absolute;left:620.2px;top:1334.2px;font-size:23.49px;line-height:29px;color:#6b7280;white-space:nowrap;letter-spacing:-1.3px;">AI: 0.0h</div><div style="position:absolute;left:708.5px;top:1346.5px;width:6.6px;height:6.6px;border-radius:50%;background:#d1d5db;"></div><div style="position:absolute;left:731.7px;top:1334.2px;font-size:23.49px;line-height:29px;color:#6b7280;white-space:nowrap;letter-spacing:-0.79px;">Manual: 72h</div><div style="position:absolute;left:1378.83px;top:957px;width:774.5px;height:473.5px;background:#fff;border:2px solid #e9ebee;box-sizing:border-box;border-radius:17px;box-shadow:0 3px 6px rgba(15,23,42,.045);"></div><div style="position:absolute;left:1422.53px;top:1000px;width:80px;height:80px;border-radius:15px;background:#f3f4f6;"></div><svg style="position:absolute;left:1442.53px;top:1019.2px;color:#6b7280;" width="40" height="40" viewBox="0 0 24 24" preserveAspectRatio="none" fill="currentColor"><path d="M11.99 2C6.47 2 2 6.48 2 12s4.47 10 9.99 10C17.52 22 22 17.52 22 12S17.52 2 11.99 2zm4.24 16L12 15.45 7.77 18l1.12-4.81-3.73-3.23 4.92-.42L12 5l1.92 4.53 4.92.42-3.73 3.23L16.23 18z"/></svg><div style="position:absolute;left:1423.83px;top:1101.5px;font-size:52.62px;line-height:66px;color:#111827;white-space:nowrap;font-weight:700;letter-spacing:-0.37px;">96.5%</div><div style="position:absolute;left:1422.73px;top:1170.7px;font-size:21.29px;line-height:27px;color:#6b7280;white-space:nowrap;letter-spacing:-1.42px;">QUALITY SCORE</div><div style="position:absolute;left:1423px;top:1232.5px;font-size:21.7px;line-height:27px;color:#111827;white-space:nowrap;letter-spacing:0.53px;-webkit-text-stroke:0.5px #111827;">Completeness</div><div style="position:absolute;left:1422.7px;top:1275.5px;width:687.6px;height:12.3px;border-radius:6.2px;background:#10b981;"></div><div style="position:absolute;left:1422.5px;top:1312.5px;font-size:21.55px;line-height:27px;color:#111827;white-space:nowrap;letter-spacing:0.53px;-webkit-text-stroke:0.5px #111827;">Accuracy</div><div style="position:absolute;left:1422.7px;top:1355.3px;width:687.6px;height:12.3px;border-radius:6.2px;background:#f1f3f5;"><div style="position:absolute;left:0px;top:0px;width:675px;height:12.3px;border-radius:6.2px;background:#10b981;"></div></div><div style="position:absolute;left:2182.17px;top:957px;width:774.5px;height:473.5px;background:#fff;border:2px solid #e9ebee;box-sizing:border-box;border-radius:17px;box-shadow:0 3px 6px rgba(15,23,42,.045);"></div><div style="position:absolute;left:2225.87px;top:1000px;width:80px;height:80px;border-radius:15px;background:#f3f4f6;"></div><svg style="position:absolute;left:2245.87px;top:1019.2px;color:#6b7280;" width="40" height="40" viewBox="0 0 24 24" preserveAspectRatio="none" fill="currentColor"><path d="M12 1L3 5v6c0 5.55 3.84 10.74 9 12 5.16-1.26 9-6.45 9-12V5l-9-4zm0 10.99h7c-.53 4.12-3.28 7.79-7 8.94V12H5V6.3l7-3.11v8.8z"/></svg><div style="position:absolute;left:2227.17px;top:1103px;font-size:50.32px;line-height:63px;color:#111827;white-space:nowrap;font-weight:700;letter-spacing:-0.55px;">15</div><div style="position:absolute;left:2226.07px;top:1171.2px;font-size:21.07px;line-height:26px;color:#6b7280;white-space:nowrap;letter-spacing:-1.31px;">RISK SCORE (LOW)</div><div style="position:absolute;left:2225.6px;top:1229.7px;width:219.5px;height:157.5px;border-radius:13px;background:#fafbfc;"></div><svg style="position:absolute;left:2315.1px;top:1249.5px;color:#3b82f6;" width="41" height="41" viewBox="0 0 24 24" preserveAspectRatio="none" fill="currentColor"><path d="M11 15h2v2h-2zm0-8h2v6h-2zm.99-5C6.47 2 2 6.48 2 12s4.47 10 9.99 10C17.52 22 22 17.52 22 12S17.52 2 11.99 2zM12 20c-4.42 0-8-3.58-8-8s3.58-8 8-8 8 3.58 8 8-3.58 8-8 8z"/></svg><div style="position:absolute;left:2295.8px;top:1296.3px;font-size:33.9px;line-height:42px;color:#111827;white-space:nowrap;font-weight:700;">8</div><div style="position:absolute;left:2295.8px;top:1340.2px;font-size:18.91px;line-height:24px;color:#6b7280;white-space:nowrap;letter-spacing:0.32px;">Identified</div><div style="position:absolute;left:2459.6px;top:1229.7px;width:219.5px;height:157.5px;border-radius:13px;background:#fafbfc;"></div><svg style="position:absolute;left:2549.1px;top:1249.5px;color:#10b981;" width="41" height="41" viewBox="0 0 24 24" preserveAspectRatio="none" fill="currentColor"><path d="M12 2C6.48 2 2 6.48 2 12s4.48 10 10 10 10-4.48 10-10S17.52 2 12 2zm-2 15l-5-5 1.41-1.41L10 14.17l7.59-7.59L19 8l-9 9z"/></svg><div style="position:absolute;left:2528.8px;top:1296.3px;font-size:33.9px;line-height:42px;color:#111827;white-space:nowrap;font-weight:700;">6</div><div style="position:absolute;left:2528.8px;top:1340.2px;font-size:18.91px;line-height:24px;color:#6b7280;white-space:nowrap;letter-spacing:0.6px;">Mitigated</div><div style="position:absolute;left:2693.6px;top:1229.7px;width:219.5px;height:157.5px;border-radius:13px;background:#fafbfc;"></div><svg style="position:absolute;left:2783.1px;top:1249.5px;color:#f59e0b;" width="41" height="41" viewBox="0 0 24 24" preserveAspectRatio="none" fill="currentColor"><path d="M1 21h22L12 2 1 21zm12-3h-2v-2h2v2zm0-4h-2v-4h2v4z"/></svg><div style="position:absolute;left:2780.3px;top:1296.3px;font-size:33.9px;line-height:42px;color:#111827;white-space:nowrap;font-weight:700;">2</div><div style="position:absolute;left:2780.3px;top:1340.2px;font-size:18.91px;line-height:24px;color:#6b7280;white-space:nowrap;letter-spacing:0.08px;">Open</div><div style="position:absolute;left:2985.5px;top:957px;width:774.5px;height:473.5px;background:#fff;border:2px solid #e9ebee;box-sizing:border-box;border-radius:17px;box-shadow:0 3px 6px rgba(15,23,42,.045);"></div><div style="position:absolute;left:3029.2px;top:1000px;width:80px;height:80px;border-radius:15px;background:#f3f4f6;"></div><svg style="position:absolute;left:3049.2px;top:1019.2px;color:#6b7280;" width="40" height="40" viewBox="0 0 24 24" preserveAspectRatio="none" fill="currentColor"><path d="M12 1L3 5v6c0 5.55 3.84 10.74 9 12 5.16-1.26 9-6.45 9-12V5l-9-4zm-2 16l-4-4 1.41-1.41L10 14.17l6.59-6.59L18 9l-8 8z"/></svg><div style="position:absolute;left:3030.5px;top:1102px;font-size:51.99px;line-height:65px;color:#111827;white-space:nowrap;font-weight:700;letter-spacing:-0.52px;">98%</div><div style="position:absolute;left:3029.4px;top:1170.7px;font-size:21.44px;line-height:27px;color:#6b7280;white-space:nowrap;letter-spacing:-1.48px;">COMPLIANCE SCORE</div><div style="position:absolute;left:3029.4px;top:1232.5px;font-size:21.2px;line-height:27px;color:#6b7280;white-space:nowrap;letter-spacing:0.63px;">Requirements Met</div><div style="position:absolute;left:3656.1px;top:1230.5px;font-size:24.42px;line-height:31px;color:#111827;white-space:nowrap;letter-spacing:-0.15px;-webkit-text-stroke:0.5px #111827;">94/94</div><div style="position:absolute;left:3029px;top:1278.3px;width:687.6px;height:8.5px;border-radius:4px;background:#085ab6;"></div><div style="position:absolute;left:3029.4px;top:1312.5px;font-size:21.2px;line-height:27px;color:#6b7280;white-space:nowrap;letter-spacing:-0.15px;">Issues Resolved</div><div style="position:absolute;left:3682.3px;top:1310.5px;font-size:24.49px;line-height:31px;color:#111827;white-space:nowrap;letter-spacing:-0.17px;-webkit-text-stroke:0.5px #111827;">3/3</div>
<svg style="position:absolute;left:576px;top:1516.5px;color:#6b7280;" width="48" height="48" viewBox="0 0 24 24" preserveAspectRatio="none" fill="currentColor"><path d="M20 6h-8l-2-2H4c-1.1 0-1.99.9-1.99 2L2 18c0 1.1.9 2 2 2h16c1.1 0 2-.9 2-2V8c0-1.1-.9-2-2-2zm0 12H4V8h16v10z"/></svg><div style="position:absolute;left:645.9px;top:1521.5px;font-size:31.8px;line-height:40px;color:#111827;white-space:nowrap;font-weight:700;letter-spacing:-0.73px;">Generated Outputs</div><div style="position:absolute;left:3376px;top:1500.7px;width:384.2px;height:80.5px;border-radius:41px;background:#fbfbfe;box-shadow:0 3px 5px rgba(15,23,42,.22),0 0 2px rgba(15,23,42,.10);"></div><svg style="position:absolute;left:3408.6px;top:1516.8px;color:#6f7380;" width="48" height="48" viewBox="0 0 24 24" preserveAspectRatio="none" fill="currentColor"><path d="M19 9h-4V3H9v6H5l7 7 7-7zM5 18v2h14v-2H5z"/></svg><div style="position:absolute;left:3473.9px;top:1526.4px;font-size:24.35px;line-height:30px;color:#085ab6;white-space:nowrap;letter-spacing:0.45px;-webkit-text-stroke:0.7px #085ab6;">Download All (6 files)</div><div style="position:absolute;left:575.5px;top:1615.5px;width:1577.8px;height:620px;background:#fff;border:2px solid #eceef1;box-sizing:border-box;border-radius:17px;box-shadow:0 3px 6px rgba(15,23,42,.045);"></div><div style="position:absolute;left:619px;top:1662.5px;width:360px;height:57.5px;border-radius:11px;background:#fef7ec;"></div><svg style="position:absolute;left:640px;top:1675px;color:#f59e0b;" width="32" height="32" viewBox="0 0 24 24" preserveAspectRatio="none" fill="currentColor"><rect x="1" y="21" width="12" height="2"/><rect x="-2" y="-10" width="4" height="20" transform="translate(13.73 13.73) rotate(-45)"/><rect x="-2" y="-4" width="4" height="8" transform="translate(13.73 5.24) rotate(-45)"/><rect x="-2" y="-4" width="4" height="8" transform="translate(5.24 13.73) rotate(-45)"/></svg><div style="position:absolute;left:687.3px;top:1677px;font-size:22.36px;line-height:28px;color:#111827;white-space:nowrap;letter-spacing:0.45px;-webkit-text-stroke:0.5px #111827;">Regulatory Analysis Agent</div><div style="position:absolute;left:1878.5px;top:1659.2px;width:232px;height:63.8px;border-radius:15px;background:#e8f7f2;border:2px solid #5d6673;box-sizing:border-box;"></div><svg style="position:absolute;left:1922.8px;top:1671.1px;color:#3b424d;" width="28" height="28" viewBox="0 0 24 24" preserveAspectRatio="none" fill="currentColor"><path d="M12 2C6.48 2 2 6.48 2 12s4.48 10 10 10 10-4.48 10-10S17.52 2 12 2zm-2 15l-5-5 1.41-1.41L10 14.17l7.59-7.59L19 8l-9 9z"/></svg><div style="position:absolute;left:1957.6px;top:1675.9px;font-size:24.84px;line-height:31px;color:#3f4753;white-space:nowrap;letter-spacing:0.53px;-webkit-text-stroke:0.6px #3f4753;">Validated</div><div style="position:absolute;left:619px;top:1752px;width:80px;height:80px;border-radius:15px;background:#fef7ec;"></div><svg style="position:absolute;left:639px;top:1770px;color:#f59e0b;" width="42" height="42" viewBox="0 0 24 24" preserveAspectRatio="none" fill="currentColor"><path d="M14 2H6c-1.1 0-1.99.9-1.99 2L4 20c0 1.1.89 2 1.99 2H18c1.1 0 2-.9 2-2V8l-6-6zm2 16H8v-2h8v2zm0-4H8v-2h8v2zm-3-5V3.5L18.5 9H13z"/></svg><div style="position:absolute;left:728.3px;top:1750px;font-size:26.8px;line-height:34px;color:#111827;white-space:nowrap;font-weight:700;letter-spacing:-0.65px;">Regulatory Requirements Analysis</div><div style="position:absolute;left:728.3px;top:1792.8px;font-size:21.65px;line-height:27px;color:#6b7280;white-space:nowrap;letter-spacing:0.42px;">Complete analysis of Omgevingswet requirements for the project</div><div style="position:absolute;left:619px;top:1860px;width:1491.5px;height:74px;border-radius:13px;background:#f9fafb;"></div><svg style="position:absolute;left:640.5px;top:1882.1px;color:#9196a1;" width="29" height="29" viewBox="0 0 24 24" preserveAspectRatio="none" fill="currentColor"><path d="M6 2c-1.1 0-1.99.9-1.99 2L4 20c0 1.1.89 2 1.99 2H18c1.1 0 2-.9 2-2V8l-6-6H6zm7 7V3.5L18.5 9H13z"/></svg><div style="position:absolute;left:679.8px;top:1884px;font-size:20.63px;line-height:26px;color:#6b7280;white-space:nowrap;letter-spacing:-2.83px;">PDF</div><svg style="position:absolute;left:743.5px;top:1882.1px;color:#9196a1;" width="29" height="29" viewBox="0 0 24 24" preserveAspectRatio="none" fill="currentColor"><path d="M2 20h20v-4H2v4zm2-3h2v2H4v-2zM2 4v4h20V4H2zm4 3H4V5h2v2zm-4 7h20v-4H2v4zm2-3h2v2H4v-2z"/></svg><div style="position:absolute;left:782.2px;top:1883.5px;font-size:22px;line-height:27px;color:#6b7280;white-space:nowrap;letter-spacing:-1.35px;">2.34 MB</div><svg style="position:absolute;left:884.75px;top:1881.75px;color:#9196a1;" width="28.5" height="28.5" viewBox="0 0 24 24" preserveAspectRatio="none" fill="currentColor"><path d="M20 3h-1V1h-2v2H7V1H5v2H4c-1.1 0-2 .9-2 2v16c0 1.1.9 2 2 2h16c1.1 0 2-.9 2-2V5c0-1.1-.9-2-2-2zm0 18H4V8h16v13z"/></svg><div style="position:absolute;left:924.2px;top:1883px;font-size:22.55px;line-height:28px;color:#6b7280;white-space:nowrap;letter-spacing:-1.14px;">12/30/25, 4:29 PM</div><div style="position:absolute;left:619.4px;top:1972.1px;font-size:19.93px;line-height:25px;color:#4b5563;white-space:nowrap;letter-spacing:0.44px;-webkit-text-stroke:0.5px #4b5563;">Confidence Score</div><div style="position:absolute;left:2060px;top:1969.5px;font-size:24.93px;line-height:31px;color:#10b981;white-space:nowrap;letter-spacing:-0.25px;-webkit-text-stroke:0.7px #10b981;">96%</div><div style="position:absolute;left:619px;top:2015.8px;width:1491.3px;height:8.2px;background:#e1e4eb;border-radius:2px;overflow:hidden;"><div style="position:absolute;left:0px;top:0px;width:1431.5px;height:8.2px;background:#085ab6;"></div></div><div style="position:absolute;left:619px;top:2051px;width:1491.5px;height:2px;background:#f1f2f4;"></div><div style="position:absolute;left:1866px;top:2080.6px;width:244.3px;height:84px;border-radius:42px;background:#fafafd;box-shadow:0 3px 5px rgba(15,23,42,.22),0 0 2px rgba(15,23,42,.10);"></div><svg style="position:absolute;left:1898.9px;top:2106px;color:#085ab6;" width="32" height="32" viewBox="0 0 24 24" preserveAspectRatio="none" fill="currentColor"><path d="M19 9h-4V3H9v6H5l7 7 7-7zM5 18v2h14v-2H5z"/></svg><div style="position:absolute;left:1947.8px;top:2105.8px;font-size:24.42px;line-height:31px;color:#085ab6;white-space:nowrap;letter-spacing:0.65px;-webkit-text-stroke:0.7px #085ab6;">Download</div><div style="position:absolute;left:2182.17px;top:1615.5px;width:1577.8px;height:620px;background:#fff;border:2px solid #eceef1;box-sizing:border-box;border-radius:17px;box-shadow:0 3px 6px rgba(15,23,42,.045);"></div><div style="position:absolute;left:2225.67px;top:1662.5px;width:407px;height:57.5px;border-radius:11px;background:#e7f8f2;"></div><svg style="position:absolute;left:2246.67px;top:1675px;color:#10b981;" width="32" height="32" viewBox="0 0 24 24" preserveAspectRatio="none" fill="currentColor"><path d="M6.05 8.05c-2.73 2.73-2.73 7.15-.02 9.88 1.47-3.4 4.09-6.24 7.36-7.93-2.77 2.34-4.71 5.61-5.39 9.32 2.6 1.23 5.8.78 7.95-1.37C19.43 14.47 20 4 20 4S9.53 4.57 6.05 8.05z"/></svg><div style="position:absolute;left:2293.97px;top:1677px;font-size:22.26px;line-height:28px;color:#111827;white-space:nowrap;letter-spacing:0.44px;-webkit-text-stroke:0.5px #111827;">Environmental Specialist Agent</div><div style="position:absolute;left:3485.17px;top:1659.2px;width:232px;height:63.8px;border-radius:15px;background:#e8f7f2;border:2px solid #5d6673;box-sizing:border-box;"></div><svg style="position:absolute;left:3529.47px;top:1671.1px;color:#3b424d;" width="28" height="28" viewBox="0 0 24 24" preserveAspectRatio="none" fill="currentColor"><path d="M12 2C6.48 2 2 6.48 2 12s4.48 10 10 10 10-4.48 10-10S17.52 2 12 2zm-2 15l-5-5 1.41-1.41L10 14.17l7.59-7.59L19 8l-9 9z"/></svg><div style="position:absolute;left:3564.27px;top:1675.9px;font-size:24.84px;line-height:31px;color:#3f4753;white-space:nowrap;letter-spacing:0.53px;-webkit-text-stroke:0.6px #3f4753;">Validated</div><div style="position:absolute;left:2225.67px;top:1752px;width:80px;height:80px;border-radius:15px;background:#e7f8f2;"></div><svg style="position:absolute;left:2245.67px;top:1770px;color:#10b981;" width="42" height="42" viewBox="0 0 24 24" preserveAspectRatio="none" fill="currentColor"><path d="M14 2H6c-1.1 0-1.99.9-1.99 2L4 20c0 1.1.89 2 1.99 2H18c1.1 0 2-.9 2-2V8l-6-6zm2 16H8v-2h8v2zm0-4H8v-2h8v2zm-3-5V3.5L18.5 9H13z"/></svg><div style="position:absolute;left:2334.97px;top:1750px;font-size:26.8px;line-height:34px;color:#111827;white-space:nowrap;font-weight:700;letter-spacing:-0.66px;">AERIUS Nitrogen Deposition Report</div><div style="position:absolute;left:2334.97px;top:1792.8px;font-size:21.68px;line-height:27px;color:#6b7280;white-space:nowrap;letter-spacing:0.42px;">Nitrogen deposition calculations for Natura 2000 impact assessment</div><div style="position:absolute;left:2225.67px;top:1860px;width:1491.5px;height:74px;border-radius:13px;background:#f9fafb;"></div><svg style="position:absolute;left:2247.17px;top:1882.1px;color:#9196a1;" width="29" height="29" viewBox="0 0 24 24" preserveAspectRatio="none" fill="currentColor"><path d="M6 2c-1.1 0-1.99.9-1.99 2L4 20c0 1.1.89 2 1.99 2H18c1.1 0 2-.9 2-2V8l-6-6H6zm7 7V3.5L18.5 9H13z"/></svg><div style="position:absolute;left:2286.47px;top:1884px;font-size:20.63px;line-height:26px;color:#6b7280;white-space:nowrap;letter-spacing:-2.83px;">PDF</div><svg style="position:absolute;left:2350.17px;top:1882.1px;color:#9196a1;" width="29" height="29" viewBox="0 0 24 24" preserveAspectRatio="none" fill="currentColor"><path d="M2 20h20v-4H2v4zm2-3h2v2H4v-2zM2 4v4h20V4H2zm4 3H4V5h2v2zm-4 7h20v-4H2v4zm2-3h2v2H4v-2z"/></svg><div style="position:absolute;left:2388.87px;top:1883.5px;font-size:22px;line-height:27px;color:#6b7280;white-space:nowrap;letter-spacing:-1.35px;">1.76 MB</div><svg style="position:absolute;left:2491.42px;top:1881.75px;color:#9196a1;" width="28.5" height="28.5" viewBox="0 0 24 24" preserveAspectRatio="none" fill="currentColor"><path d="M20 3h-1V1h-2v2H7V1H5v2H4c-1.1 0-2 .9-2 2v16c0 1.1.9 2 2 2h16c1.1 0 2-.9 2-2V5c0-1.1-.9-2-2-2zm0 18H4V8h16v13z"/></svg><div style="position:absolute;left:2530.87px;top:1883px;font-size:22.55px;line-height:28px;color:#6b7280;white-space:nowrap;letter-spacing:-1.14px;">12/30/25, 4:29 PM</div><div style="position:absolute;left:2226.07px;top:1972.1px;font-size:19.93px;line-height:25px;color:#4b5563;white-space:nowrap;letter-spacing:0.44px;-webkit-text-stroke:0.5px #4b5563;">Confidence Score</div><div style="position:absolute;left:3666.67px;top:1969.5px;font-size:24.93px;line-height:31px;color:#3b82f6;white-space:nowrap;letter-spacing:-0.25px;-webkit-text-stroke:0.7px #3b82f6;">94%</div><div style="position:absolute;left:2225.67px;top:2015.8px;width:1491.3px;height:8.2px;background:#e1e4eb;border-radius:2px;overflow:hidden;"><div style="position:absolute;left:0px;top:0px;width:1401.5px;height:8.2px;background:#085ab6;"></div></div><div style="position:absolute;left:2225.67px;top:2051px;width:1491.5px;height:2px;background:#f1f2f4;"></div><div style="position:absolute;left:3472.67px;top:2080.6px;width:244.3px;height:84px;border-radius:42px;background:#fafafd;box-shadow:0 3px 5px rgba(15,23,42,.22),0 0 2px rgba(15,23,42,.10);"></div><svg style="position:absolute;left:3505.57px;top:2106px;color:#085ab6;" width="32" height="32" viewBox="0 0 24 24" preserveAspectRatio="none" fill="currentColor"><path d="M19 9h-4V3H9v6H5l7 7 7-7zM5 18v2h14v-2H5z"/></svg><div style="position:absolute;left:3554.47px;top:2105.8px;font-size:24.42px;line-height:31px;color:#085ab6;white-space:nowrap;letter-spacing:0.65px;-webkit-text-stroke:0.7px #085ab6;">Download</div>
</div>
</body></html>
